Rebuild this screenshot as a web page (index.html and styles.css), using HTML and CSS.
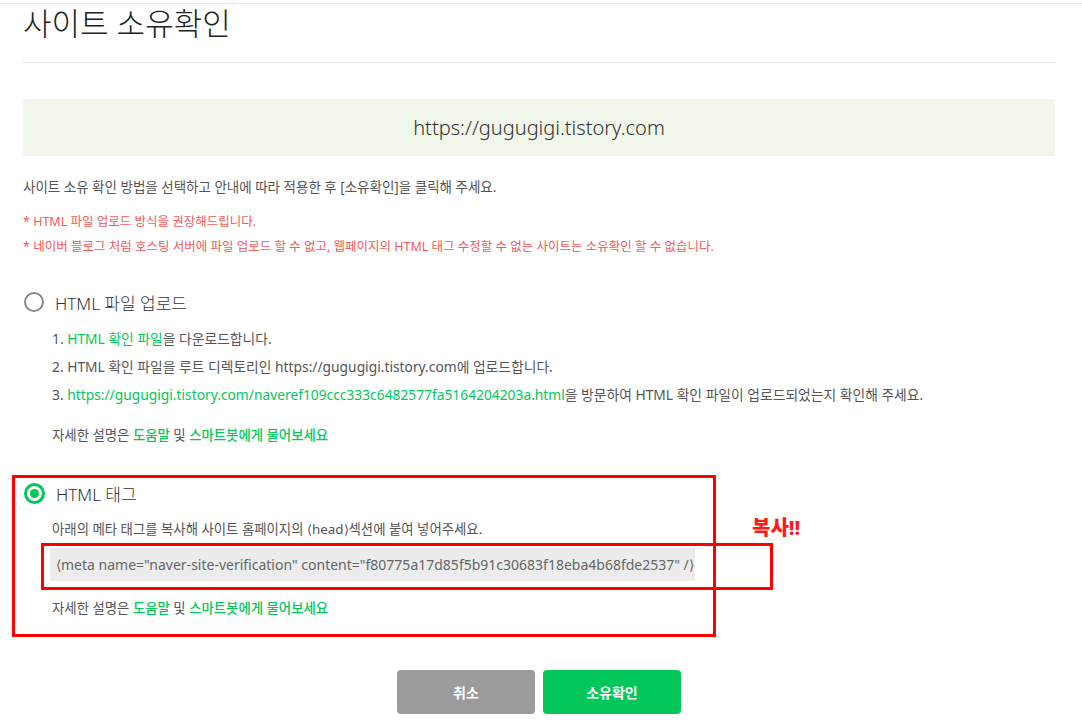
FILE: index.html
```html
<!DOCTYPE html>
<html lang="ko">
<head>
    <meta charset="UTF-8">
    <meta name="viewport" content="width=device-width, initial-scale=1.0">
    <title>사이트 소유확인</title>
    <link rel="stylesheet" href="styles.css">
</head>
<body>
    <div class="topline"></div>
    <div class="page">
        <div class="page-head">
            <h1>사이트 소유확인</h1>
        </div>

        <div class="site-url">https://gugugigi.tistory.com</div>

        <p class="intro">사이트 소유 확인 방법을 선택하고 안내에 따라 적용한 후 [소유확인]을 클릭해 주세요.</p>
        <ul class="notes">
            <li>* HTML 파일 업로드 방식을 권장해드립니다.</li>
            <li>* 네이버 블로그 처럼 호스팅 서버에 파일 업로드 할 수 없고, 웹페이지의 HTML 태그 수정할 수 없는 사이트는 소유확인 할 수 없습니다.</li>
        </ul>

        <div class="method">
            <label class="method-title">
                <span class="radio"></span>
                HTML 파일 업로드
            </label>
            <ol class="steps">
                <li>1. <a href="#">HTML 확인 파일</a>을 다운로드합니다.</li>
                <li>2. HTML 확인 파일을 루트 디렉토리인 https://gugugigi.tistory.com에 업로드합니다.</li>
                <li>3. <a href="#">https://gugugigi.tistory.com/naveref109ccc333c6482577fa5164204203a.html</a>을 방문하여 HTML 확인 파일이 업로드되었는지 확인해 주세요.</li>
            </ol>
            <p class="help">자세한 설명은 <a href="#">도움말</a> 및 <a href="#">스마트봇에게 물어보세요</a></p>
        </div>

        <div class="method method--marked">
            <label class="method-title">
                <span class="radio radio--on"></span>
                HTML 태그
            </label>
            <p class="desc">아래의 메타 태그를 복사해 사이트 홈페이지의 ⟨head⟩섹션에 붙여 넣어주세요.</p>
            <div class="code-wrap">
                <div class="code">⟨meta name="naver-site-verification" content="f80775a17d85f5b91c30683f18eba4b68fde2537" /⟩</div>
                <div class="mark"></div>
                <span class="mark-label">복사!!</span>
            </div>
            <p class="help help--tag">자세한 설명은 <a href="#">도움말</a> 및 <a href="#">스마트봇에게 물어보세요</a></p>
        </div>

        <div class="actions">
            <button class="btn btn--cancel">취소</button>
            <button class="btn btn--ok">소유확인</button>
        </div>
    </div>
</body>
</html>
```

FILE: styles.css
```css
body {
    margin: 0;
    font-family: 'Noto Sans', 'Noto Sans CJK KR', sans-serif;
    color: #555;
    background: #fff;
}

.topline {
    height: 1px;
    margin-top: 3px;
    background-color: #e3e3e3;
}

.page {
    width: 1032px;
    margin-left: 23px;
}

.page-head {
    padding-bottom: 20px;
    border-bottom: 1px solid #e3e3e3;
}

h1 {
    margin: 0;
    font-size: 31px;
    line-height: 38px;
    font-weight: 300;
    color: #222;
}

.site-url {
    margin-top: 36px;
    height: 57px;
    line-height: 57px;
    text-align: center;
    background-color: #f0f6e9;
    font-size: 20px;
    color: #333;
    font-weight: 300;
}

.intro {
    margin: 21px 0 0;
    font-size: 13.5px;
    line-height: 20px;
}

.notes {
    list-style: none;
    margin: 12px 0 0;
    padding: 0;
    font-size: 12.5px;
    line-height: 25px;
    color: #f25a5a;
}

.method {
    margin-top: 28px;
}

.method-title {
    display: flex;
    align-items: center;
    gap: 11px;
    height: 30px;
    font-size: 17px;
    font-weight: 300;
    color: #333;
    padding-left: 1px;
}

.radio {
    width: 16px;
    height: 16px;
    border: 2px solid #888;
    border-radius: 50%;
    flex-shrink: 0;
    position: relative;
}

.radio--on {
    border: 3px solid #03c75a;
    width: 15px;
    height: 15px;
}

.radio--on::after {
    content: '';
    position: absolute;
    top: 3px;
    left: 3px;
    width: 9px;
    height: 9px;
    border-radius: 50%;
    background-color: #03c75a;
}

.steps {
    list-style: none;
    margin: 8px 0 0;
    padding-left: 29px;
    font-size: 13.8px;
    line-height: 28px;
}

a {
    color: #03c75a;
    text-decoration: none;
}

.help {
    margin: 12px 0 0 29px;
    font-size: 13.4px;
    line-height: 28px;
}

.help a {
    font-weight: 500;
}

.method--marked {
    width: 704px;
    box-sizing: border-box;
    margin: 26px 0 0 -11px;
    padding: 0 0 16px 8px;
    border: 3px solid #ff0000;
}

.desc {
    margin: 11px 0 0 29px;
    font-size: 13.4px;
    line-height: 20px;
}

.code-wrap {
    position: relative;
    margin: 9px 0 0 27px;
    width: 645px;
}

.code {
    height: 33px;
    line-height: 33px;
    padding-left: 6px;
    background-color: #ececec;
    font-size: 14px;
    color: #666;
    white-space: nowrap;
}

.mark {
    position: absolute;
    top: -5px;
    left: -9px;
    width: 732px;
    height: 47px;
    box-sizing: border-box;
    border: 3px solid #ff0000;
}

.mark-label {
    position: absolute;
    top: -33px;
    left: 702px;
    font-size: 20px;
    line-height: 26px;
    font-weight: 800;
    color: #ff1a1a;
    white-space: nowrap;
}

.help--tag {
    margin-top: 17px;
    line-height: 20px;
}

.actions {
    display: flex;
    justify-content: center;
    gap: 8px;
    margin-top: 33px;
}

.btn {
    width: 138px;
    height: 44px;
    border: none;
    border-radius: 4px;
    font-family: inherit;
    font-size: 14px;
    font-weight: 700;
    color: #fff;
    cursor: pointer;
}

.btn--cancel {
    background-color: #9b9b9b;
}

.btn--ok {
    background-color: #03c75a;
}
```
